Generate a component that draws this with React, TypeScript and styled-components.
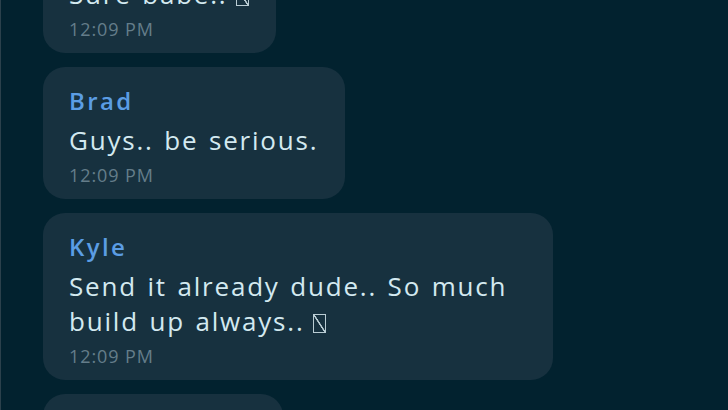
import React from "react"
import styled, { createGlobalStyle } from "styled-components"

const GlobalStyle = createGlobalStyle`
  html, body {
    margin: 0;
    padding: 0;
    height: 100%;
    background: #02222f;
    overflow: hidden;
  }
  body {
    font-family: "Open Sans", "Noto Sans", sans-serif;
  }
`

const Screen = styled.div`
  width: 728px;
  height: 410px;
  overflow: hidden;
  background: #02222f;
  border-left: 1px solid #2b414c;
  box-sizing: border-box;
`

const Thread = styled.div`
  display: flex;
  flex-direction: column;
  align-items: flex-start;
  gap: 14px;
  margin-top: -40px;
  padding-left: 42px;
`

const Bubble = styled.div<{ $minWidth?: number }>`
  background: #17313f;
  border-radius: 22px;
  padding: 17px 27px 7px 26px;
  max-width: 457px;
  min-width: ${(p) => (p.$minWidth ? `${p.$minWidth}px` : "0")};
  min-height: 20px;
  box-sizing: content-box;
`

const Sender = styled.div`
  color: #5b9de4;
  font-size: 24px;
  font-weight: 600;
  line-height: 34px;
  letter-spacing: 2.4px;
  margin-bottom: 5px;
`

const Body = styled.div`
  color: #d3e9f0;
  font-size: 26px;
  font-weight: 500;
  line-height: 35px;
  letter-spacing: 1.8px;
  word-spacing: 2px;
`

const Time = styled.div`
  color: #647d8a;
  font-size: 18px;
  font-weight: 500;
  line-height: 34px;
  letter-spacing: 0.9px;
`

const Tofu = styled.span`
  display: inline-block;
  width: 11px;
  height: 17px;
  border: 1.5px solid #b9ccd3;
  margin-left: 8px;
  vertical-align: -2px;
  background: linear-gradient(
    to bottom left,
    transparent calc(50% - 1px),
    #b9ccd3 calc(50% - 0.5px),
    #b9ccd3 calc(50% + 0.5px),
    transparent calc(50% + 1px)
  );
`

interface Message {
  sender?: string
  text: string
  tofu?: boolean
  time: string
}

const messages: Message[] = [
  { text: "Sure babe..", tofu: true, time: "12:09 PM" },
  { sender: "Brad", text: "Guys.. be serious.", time: "12:09 PM" },
  {
    sender: "Kyle",
    text: "Send it already dude.. So much build up always..",
    tofu: true,
    time: "12:09 PM",
  },
]

const App: React.FC = () => {
  return (
    <>
      <GlobalStyle />
      <Screen>
        <Thread>
          {messages.map((m, i) => (
            <Bubble key={i}>
              {m.sender && <Sender>{m.sender}</Sender>}
              <Body>
                {m.text}
                {m.tofu && <Tofu />}
              </Body>
              <Time>{m.time}</Time>
            </Bubble>
          ))}
          {/* next message, only its top edge shows */}
          <Bubble $minWidth={187} />
        </Thread>
      </Screen>
    </>
  )
}

export default App
